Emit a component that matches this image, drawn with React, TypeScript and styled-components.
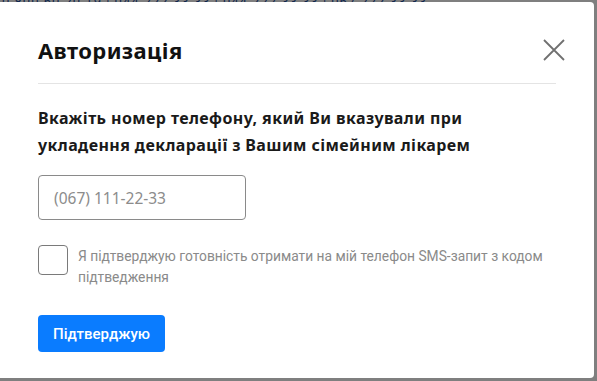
import { useState } from "react";
import styled, { createGlobalStyle } from "styled-components";

const GlobalStyle = createGlobalStyle`
  html, body {
    margin: 0;
    padding: 0;
    width: 597px;
    height: 381px;
    overflow: hidden;
    font-family: "Noto Sans", Roboto, sans-serif;
  }
  * { box-sizing: border-box; }
`;

const Page = styled.div`
  position: relative;
  width: 597px;
  height: 381px;
  background: #ffffff;
  overflow: hidden;
`;

const Phones = styled.div`
  padding: 0 0 0 2px;
  height: 3px;
  overflow: hidden;
  font-family: "Roboto", sans-serif;
  font-size: 13px;
  line-height: 3px;
  color: #1f4f9c;
  white-space: nowrap;
  letter-spacing: 1px;
`;

const Overlay = styled.div`
  position: absolute;
  inset: 0;
  background: rgba(0, 0, 0, 0.5);
`;

const Modal = styled.div`
  position: absolute;
  top: 2px;
  left: -10px;
  right: 3px;
  bottom: 3px;
  background: #ffffff;
  border-radius: 4px;
  padding: 14px 28px 0 48px;
  display: flex;
  flex-direction: column;
`;

const Header = styled.div`
  display: flex;
  align-items: center;
  justify-content: space-between;
  height: 68px;
  border-bottom: 1px solid #e4e4e4;
  margin-right: 10px;
`;

const Title = styled.h2`
  margin: 0;
  font-size: 22px;
  font-weight: 700;
  color: #111111;
  letter-spacing: 0.4px;
`;

const CloseButton = styled.button`
  display: flex;
  padding: 0;
  margin: 0 -10px 0 0;
  border: 0;
  background: none;
  cursor: pointer;
`;

const Lead = styled.p`
  margin: 21px 0 0;
  font-size: 16px;
  line-height: 27px;
  font-weight: 700;
  color: #1a1a1a;
  letter-spacing: 0.4px;
`;

const PhoneInput = styled.input`
  margin-top: 16px;
  width: 208px;
  height: 45px;
  border: 1px solid #8a8a8a;
  border-radius: 4px;
  padding: 0 15px;
  font-family: "Noto Sans", sans-serif;
  font-size: 15.5px;
  color: #222;
  outline: none;

  &::placeholder {
    color: #8c8c8c;
  }
`;

const ConsentRow = styled.label`
  display: flex;
  gap: 10px;
  margin-top: 25px;
  cursor: pointer;
`;

const Box = styled.span<{ $checked: boolean }>`
  flex: none;
  width: 30px;
  height: 30px;
  border: 1px solid #7a7a7a;
  border-radius: 4px;
  background: ${({ $checked }) => ($checked ? "#0a7cff" : "#fff")};
`;

const ConsentText = styled.span`
  font-family: "Roboto", sans-serif;
  font-size: 13.8px;
  line-height: 21px;
  color: #8a8a8a;
  margin-top: 1px;
  max-width: 480px;
`;

const SubmitButton = styled.button`
  align-self: flex-start;
  margin-top: 27px;
  width: 127px;
  height: 37px;
  border: 0;
  border-radius: 4px;
  background: #0a7cff;
  color: #ffffff;
  font-family: "Roboto", sans-serif;
  font-size: 15px;
  font-weight: 500;
  cursor: pointer;
`;

function CloseIcon() {
  return (
    <svg width="24" height="24" viewBox="0 0 24 24">
      <path d="M2 2 L22 22 M22 2 L2 22" stroke="#707070" strokeWidth="1.8" fill="none" />
    </svg>
  );
}

export default function App() {
  const [checked, setChecked] = useState(false);

  return (
    <>
      <GlobalStyle />
      <Page>
        <Phones>0 800 60 20 19 | 044 222 33 33 | 044 222 33 33 | 067 222 33 33</Phones>
        <Overlay />
        <Modal>
          <Header>
            <Title>Авторизація</Title>
            <CloseButton aria-label="close">
              <CloseIcon />
            </CloseButton>
          </Header>
          <Lead>
            Вкажіть номер телефону, який Ви вказували при
            <br />
            укладення декларації з Вашим сімейним лікарем
          </Lead>
          <PhoneInput placeholder="(067) 111-22-33" />
          <ConsentRow onClick={() => setChecked(!checked)}>
            <Box $checked={checked} />
            <ConsentText>
              Я підтверджую готовність отримати на мій телефон SMS-запит з кодом підтведження
            </ConsentText>
          </ConsentRow>
          <SubmitButton>Підтверджую</SubmitButton>
        </Modal>
      </Page>
    </>
  );
}
